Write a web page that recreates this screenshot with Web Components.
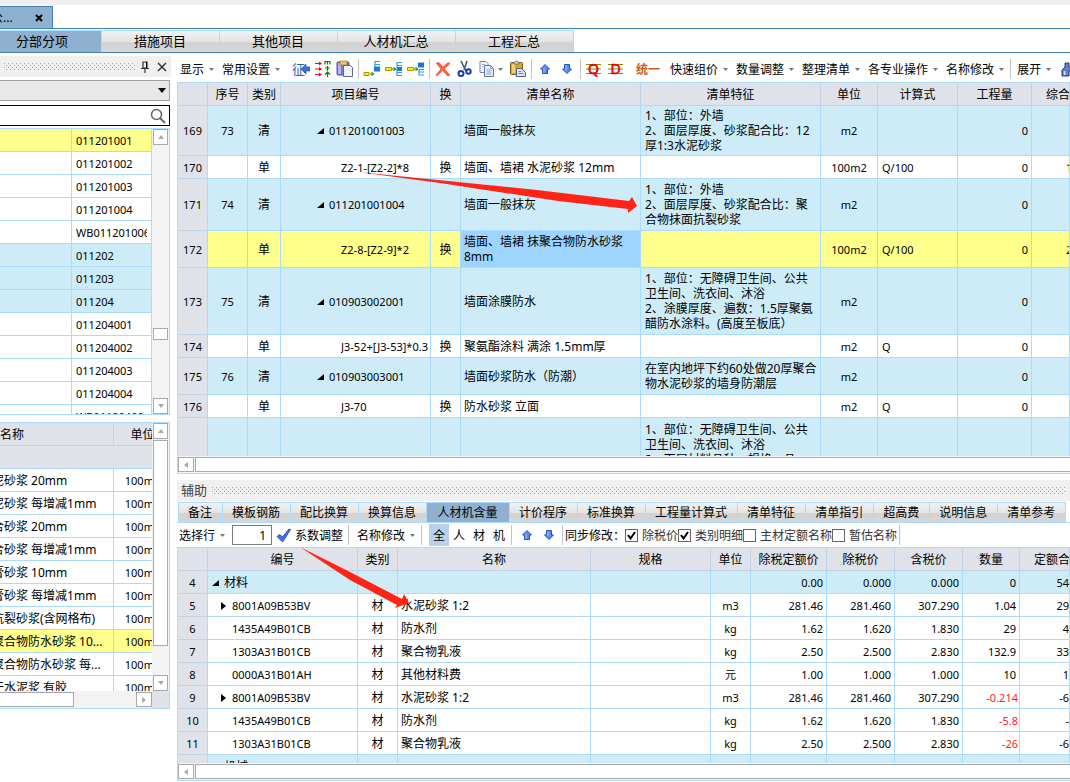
<!DOCTYPE html>
<html lang="zh-CN">
<head>
<meta charset="utf-8">
<title>分部分项</title>
<style>
  html, body { margin: 0; height: 100%; }
  body {
    --line: #abdcff; --edge: #3f80b4; --head: #dfe2e8; --head-line: #c3d3e6;
    --bill: #cdecf8; --mark: #ffff8c; --active: #8fb0ce;
    font: 12px/15px "Noto Sans", "Noto Sans CJK SC", sans-serif;
    color: #000; background: #fff; overflow: hidden;
  }
</style>
</head>
<body>
<cost-app></cost-app>

<script>
const define = (name, html, setup) => {
  const tpl = document.createElement('template');
  tpl.innerHTML = html;
  customElements.define(name, class extends HTMLElement {
    constructor() {
      super();
      this.attachShadow({ mode: 'open' }).append(tpl.content.cloneNode(true));
    }
    connectedCallback() { if (setup && !this.ready) { this.ready = true; setup(this, this.shadowRoot); } }
  });
};

/* ---------- icons ---------- */
const upArrow = '<path d="M9 4.500L13.500 9H11.500V13.500H6.500V9H4.500Z" fill="#5b8df0" stroke="#2450b8"/><path d="M8 8v5" stroke="#a9c6ff"/>';
const downArrow = '<path d="M9 13.500L13.500 9H11.500V4.500H6.500V9H4.500Z" fill="#5b8df0" stroke="#2450b8"/><path d="M8 5v5" stroke="#a9c6ff"/>';
const blueBars = '<g fill="none" stroke="#3a9ae0" stroke-width="1.200">';
const icons = {
  levy: '<text x="0" y="14" font-size="13" fill="#1f62c4">征</text><path d="M9 9l5-5v3h4v4h-4v3z" fill="#3a6fd8" stroke="#1c3f9c" stroke-width=".6"/>',
  arrows: '<g stroke="#f00" stroke-width="1.200" fill="#f00"><path d="M1 3.500h6M1 9h6M1 14.500h6"/><path d="M5 1.500l3 2-3 2zM5 7l3 2-3 2zM5 12.500l3 2-3 2z" stroke="none"/></g><g stroke="#080" fill="none" stroke-width="1.200"><path d="M11 4.500V1.500h5v3M13.500 1.500v3M11 8h5M13.500 6v5M13.500 12v5M11 14.500l2.500-2.500 2.500 2.500"/></g>',
  clip: '<rect x="1" y="2" width="12" height="13" rx="1" fill="#7a78d4" stroke="#5350a8"/><rect x="2" y="3" width="3" height="11" fill="#b5b3f2"/><rect x="4" y="1" width="7" height="4" fill="#efc85c" stroke="#927330" stroke-width=".7"/><path d="M7.500 5.500h7l2 2v9h-9z" fill="#eef3fc" stroke="#566a94"/>',
  insChild: '<path d="M1 12.500h5v3H1z" fill="#fff000" stroke="#c88800"/><path d="M7 14h4M8.500 12l2 2-2 2" stroke="#087a08" fill="none"/><path d="M11 6.500h6v5h-6z" fill="#1d78d4"/>' + blueBars + '<path d="M17 1.500h-5v3h5M12 4v3"/></g>',
  insMid: '<path d="M0.500 7.500h6v3h-6z" fill="#fff000" stroke="#c88800"/><path d="M7 9h4M8.500 7l2 2-2 2" stroke="#087a08" fill="none"/><path d="M12 7h5v4h-5z" fill="#1d78d4"/>' + blueBars + '<path d="M17 2.500h-5v13h5M12 5.500h5M12 12.500h5"/></g>',
  insTop: '<path d="M0.500 7.500h6v3h-6z" fill="#fff000" stroke="#c88800"/><path d="M7 9h4M8.500 7l2 2-2 2" stroke="#087a08" fill="none"/><path d="M11 2.500h6v5h-6z" fill="#1d78d4"/>' + blueBars + '<path d="M17 9.500h-5v5.500h5M12 12h5"/></g>',
  del: '<path d="M2 3l3-.5 4 4.500 5-4.500 2 1-5.500 5.500 5.500 6-2 1-5.500-5.500L3 16l-1-1 5-6z" fill="#ff5f3c" stroke="#d83a1e" stroke-width=".5"/>',
  cut: '<path d="M5 1l5 10M11 1L8 10" stroke="#44597e" stroke-width="1.600" fill="none"/><circle cx="5" cy="13.500" r="2.500" fill="none" stroke="#173fa8" stroke-width="2"/><circle cx="12.500" cy="11.500" r="2.200" fill="none" stroke="#173fa8" stroke-width="2"/>',
  copy: '<path d="M2 1.500h6l2 2v9H2z" fill="#f3f6fc" stroke="#7285b8"/><path d="M6.500 5.500h6l3 3v8h-9z" fill="#e8effa" stroke="#5f74aa"/><path d="M12.500 5.500v3h3M8.500 10h5M8.500 12h5M8.500 14h5M4 4.500h3M4 6.500h1" stroke="#7f94c6" stroke-width=".8" fill="none"/>',
  paste: '<rect x="1.500" y="2.500" width="12" height="12" rx="1" fill="#d9a335" stroke="#80591a"/><rect x="3" y="4" width="3" height="9" fill="#f2cf72"/><path d="M5 4V2h1.500l1-1.500 1 1.500H10v2z" fill="#ddd" stroke="#555" stroke-width=".7"/><path d="M7.500 8.500h5l4 4v4h-9z" fill="#dce6f6" stroke="#4b5d85"/><path d="M9.500 11.500h3M9.500 13.500h5" stroke="#7084ac"/>',
  up: upArrow, down: downArrow,
  q: '<path d="M1 4.500h15M1 9h15M1 13.500h15" stroke="#8a8a00" stroke-width="1.200"/><text x="8.500" y="14" text-anchor="middle" font-size="14" fill="#e80000" stroke="#e80000" stroke-width=".6">Q</text>',
  d: '<path d="M1 4.500h15M1 9h15M1 13.500h15" stroke="#8a8a00" stroke-width="1.200"/><text x="8.500" y="14" text-anchor="middle" font-size="14" fill="#e80000" stroke="#e80000" stroke-width=".6">D</text>',
  find: '<path d="M4 3h4v4h3V3h4v4l3 3v6h-7v-5H8v5H1v-6l3-3z" fill="#5f83bf" stroke="#213b7c"/><path d="M3.500 11v4M12.500 11v4" stroke="#dbe7fa" stroke-width="1.600"/>',
  check: '<path d="M2 10.500l3-2 2.500 2.500L14 3l1.500.5L8 15.500H7z" fill="#3f72f0" stroke="#153aa8" stroke-width=".8"/>'
};
define('ui-icon', `<style>:host{display:block;width:18px;height:18px}svg{display:block;width:18px;height:18px}</style><svg viewBox="0 0 18 18" aria-hidden="true"></svg>`,
  (el, root) => { root.querySelector('svg').innerHTML = icons[el.getAttribute('name')]; });

/* ---------- toolbar parts ---------- */
const buttonReset = 'button{display:flex;align-items:center;margin:0;padding:0;border:0;background:none;font:inherit;color:inherit;white-space:nowrap}';
define('tool-bar', `<style>:host{display:flex;align-items:center;overflow:hidden;white-space:nowrap}</style><slot></slot>`);
define('tool-group', `<style>:host{display:flex;align-items:center;flex:none;gap:4px;padding:0 0 0 4px}</style><slot></slot>`);
define('tool-sep', `<style>:host{display:block;flex:none;width:1px;height:20px;margin:0 2px;background:#c4c4c4}</style>`);
define('tool-menu', `<style>:host{display:block;flex:none}${buttonReset}button{gap:5px;padding-right:4px}svg{width:5px;height:3px}</style>
  <button aria-haspopup="menu"><slot></slot><svg viewBox="0 0 5 3" aria-hidden="true"><path d="M0 0h5L2.500 3z" fill="#777"/></svg></button>`);
define('icon-button', `<style>:host{display:block;flex:none}${buttonReset}button{justify-content:center;width:22px;height:22px}</style>
  <button><ui-icon></ui-icon></button>`, (el, root) => {
    const icon = document.createElement('ui-icon');
    icon.setAttribute('name', el.getAttribute('name'));
    root.querySelector('ui-icon').replaceWith(icon);
    root.querySelector('button').setAttribute('aria-label', el.getAttribute('label'));
  });
define('text-button', `<style>:host{display:block;flex:none}${buttonReset}button{justify-content:center;gap:2px;min-width:20px;height:22px}:host([pressed]) button{background:#b9d1e8}</style>
  <button><slot></slot></button>`);
define('check-option', `<style>:host{display:block;flex:none;color:#333}label{display:flex;align-items:center;gap:4px}
  .box{display:grid}.box>*{grid-area:1/1}input{appearance:none;margin:0;width:13px;height:13px;border:1px solid #666;background:#fff}
  svg{width:13px;height:13px;visibility:hidden;pointer-events:none}input:checked+svg{visibility:visible}</style>
  <label><span class="box"><input type="checkbox"><svg viewBox="0 0 13 13"><path d="M3 6l2.500 3.500L10 3" fill="none" stroke="#000" stroke-width="2"/></svg></span><slot></slot></label>`,
  (el, root) => { root.querySelector('input').checked = el.hasAttribute('checked'); });

/* ---------- tabs ---------- */
define('tab-item', `<style>:host{display:block;flex:none}${buttonReset}
  button{box-sizing:border-box;justify-content:center;width:100%;height:var(--tab-h,19px);padding:0 10px 0 9px;border-right:1px solid var(--line);
    background:linear-gradient(#f2f2f2,#e4e4e4 50%,#d2d2d2 55%,#d6d6d6)}
  :host([selected]) button{min-width:83px;background:var(--active)}</style><button role="tab"><slot></slot></button>`);
define('tab-strip', `<style>:host{display:flex;border-bottom:1px solid var(--line)}.row{display:flex;flex:none;border:1px solid var(--line);border-width:1px 0 0 1px}</style>
  <div class="row" role="tablist"><slot></slot></div>`);

/* ---------- docked panel caption ---------- */
define('panel-title', `<style>:host{display:flex;align-items:center;box-sizing:border-box;flex:none;height:21px;gap:5px;padding:0 4px;background:#f0f0f0;color:#444;font-size:13px}
  svg{display:block;flex:1;min-width:0;height:8px}::slotted(*){flex:none}</style>
  <slot></slot><svg aria-hidden="true"><defs><pattern id="dots" width="4" height="4" patternUnits="userSpaceOnUse"><path d="M0 0h1v1H0zM2 2h1v1H2z" fill="#a4a4a4"/></pattern></defs><rect width="100%" height="8" fill="url(#dots)"/></svg><slot name="end"></slot>`);

/* ---------- scroll bar ---------- */
define('scroll-bar', `<style>
  :host{display:flex;box-sizing:border-box;background:#f3f3f3;gap:1px;padding:1px 0 1px}
  :host([vertical]){flex-direction:column;padding:0 1px}
  ${buttonReset}
  button{box-sizing:border-box;flex:none;justify-content:center;width:16px;height:15px;border:1px solid #a9a9a9;background:#fff}
  :host([vertical]) button{width:15px;height:16px}
  .track{display:flex;flex:1;flex-direction:inherit;min-width:0;min-height:0}
  .thumb{box-sizing:border-box;border:1px solid #a9a9a9;background:#fff}
  svg{width:8px;height:8px}
  :host([nostart]) .start,:host([noend]) .end{display:none}
  :host([nostart]) .thumb{border-left:0}
  :host([noend]) .thumb{border-right:0}
  </style><button class="start" aria-label="后退"><svg viewBox="0 0 8 8"><path fill="#a9a9a9"/></svg></button>
  <div class="track"><div class="pre"></div><div class="thumb"></div><div class="post"></div></div>
  <button class="end" aria-label="前进"><svg viewBox="0 0 8 8"><path fill="#a9a9a9"/></svg></button>`, (el, root) => {
    const v = el.hasAttribute('vertical');
    const [s, e] = root.querySelectorAll('path');
    s.setAttribute('d', v ? 'M1 6h6L4 2z' : 'M6 1v6L2 4z');
    e.setAttribute('d', v ? 'M1 2h6L4 6z' : 'M2 1v6l4-3z');
    const parts = el.getAttribute('parts').split(' ');
    ['.pre', '.thumb', '.post'].forEach((c, i) => { root.querySelector(c).style.flex = parts[i] + ' 1 0'; });
  });

/* ---------- data grid ---------- */
define('data-grid', `<style>
  :host{display:grid;box-sizing:border-box;grid-template:"view v" minmax(0,1fr) "h corner" auto / minmax(0,1fr) auto;border:1px solid var(--line);background:#fff;min-height:0}
  :host([open-left]){border-left:0}:host([open-right]){border-right:0}
  .view{grid-area:view;overflow:hidden}
  table{border-collapse:separate;border-spacing:0;table-layout:fixed;width:100%}
  table.fixed{width:0}
  th,td{box-sizing:border-box;padding:0 3px;border-right:1px solid var(--line);border-bottom:1px solid var(--line);font-weight:400;text-align:left;vertical-align:middle}
  td>div,th>div{overflow:hidden;white-space:pre}
  thead th{background:var(--head);border-color:var(--head-line);text-align:center;padding:0}
  tbody th{background:var(--head);border-color:var(--head-line)}
  .n{font-size:11px}.c{text-align:center}.r{text-align:right}
  .lead{text-align:left;padding-left:14px}
  .first{text-align:left}
  .far{padding:0 0 0 34px}.flush{padding:0}
  .code{padding:0 4px}
  .off{padding:0;text-indent:-8px}
  .bill>td{background:var(--bill)}.mark>td{background:var(--mark)}.mark>td.sel{background:#9dd5ff}
  .feat{padding:0 0 0 4px}
  .top>td.feat{vertical-align:top;padding-top:4px}
  .neg{color:#f22;padding-right:1px}
  .l1{padding-left:36px}.l2{padding:0 0 0 60px}
  .t0{padding-left:4px}.t1{padding-left:12px}.t2{padding-left:24px}
  svg{width:7px;height:8px;margin-right:5px}
  ::slotted([slot=v]){grid-area:v;width:17px}::slotted([slot=h]){grid-area:h;height:17px}
  ::slotted([slot=corner]){grid-area:corner;background:var(--head)}
  </style><div class="view"><table><colgroup></colgroup><thead></thead><tbody></tbody></table></div><slot name="v"></slot><slot name="h"></slot><slot name="corner"></slot>`,
  (el, root) => {
    const { cols, rows, fixed } = grids[el.id];
    const open = '<svg viewBox="0 0 7 8"><path d="M7 1v6H0z"/></svg>', shut = '<svg viewBox="0 0 7 8"><path d="M1 0v8l5-4z"/></svg>';
    const text = s => String(s).replace('◢', open).replace('▶', shut);
    root.querySelector('table').classList.toggle('fixed', !!fixed);
    root.querySelector('colgroup').innerHTML = cols.map(c => c.w ? `<col style="width:${c.w}px">` : '<col>').join('');
    if (cols[0].h !== undefined) root.querySelector('thead').innerHTML =
      `<tr style="height:23px">${cols.map(c => `<th class="${c.hc || ''}"><div>${c.h}</div></th>`).join('')}</tr>` +
      (el.hasAttribute('filter') ? `<tr style="height:23px"><th style="border-color:var(--head) var(--head) var(--line)" colspan="${cols.length}"></th></tr>` : '');
    root.querySelector('tbody').innerHTML = rows.map(r => `<tr class="${r.k || ''}" style="height:${r.h || 23}px">` + cols.map((c, i) => {
      const v = r.v[i] ?? '', tag = c.row ? 'th' : 'td';
      const cell = typeof v === 'object' ? v : { t: v, c: '' };
      return `<${tag} class="${c.c || ''} ${cell.c}"><div>${text(cell.t)}</div></${tag}>`;
    }).join('') + '</tr>').join('');
  });

const l1 = t => ({ t: '◢' + t, c: 'l1' }), l2 = t => ({ t, c: 'l2' });
const t1 = t => ({ t: '▶' + t, c: 't1' }), t2 = t => ({ t, c: 't2' }), neg = t => ({ t, c: 'neg' });
const grids = {
  bill: {
    cols: [
      { h: '', w: 30, c: 'n c', row: 1 }, { h: '序号', w: 40, c: 'n c' }, { h: '类别', w: 33, c: 'c' }, { h: '项目编号', w: 150, c: 'n' },
      { h: '换', w: 30, c: 'c' }, { h: '清单名称', w: 180 }, { h: '清单特征', w: 180, c: 'feat' }, { h: '单位', w: 57, c: 'n c' },
      { h: '计算式', w: 80, c: 'n code' }, { h: '工程量', w: 74, c: 'n r' }, { h: '综合单价', hc: 'lead', c: 'n far' }],
    rows: [
      { k: 'bill', h: 50, v: ['169', '73', '清', l1('011201001003'), '', '墙面一般抹灰', '1、部位：外墙\n2、面层厚度、砂浆配合比：12\n厚1:3水泥砂浆', 'm2', '', '0'] },
      { v: ['170', '', '单', l2('Z2-1-[Z2-2]*8'), '换', '墙面、墙裙 水泥砂浆 12mm', '', '100m2', 'Q/100', '0', '1'] },
      { k: 'bill', h: 52, v: ['171', '74', '清', l1('011201001004'), '', '墙面一般抹灰', '1、部位：外墙\n2、面层厚度、砂浆配合比：聚\n合物抹面抗裂砂浆', 'm2', '', '0'] },
      { k: 'mark', h: 37, v: ['172', '', '单', l2('Z2-8-[Z2-9]*2'), '换', { t: '墙面、墙裙 抹聚合物防水砂浆\n8mm', c: 'sel' }, '', '100m2', 'Q/100', '0', '2'] },
      { k: 'bill', h: 67, v: ['173', '75', '清', l1('010903002001'), '', '墙面涂膜防水', '1、部位：无障碍卫生间、公共\n卫生间、洗衣间、沐浴\n2、涂膜厚度、遍数：1.5厚聚氨\n醋防水涂料。(高度至板底）', 'm2', '', '0'] },
      { v: ['174', '', '单', l2('J3-52+[J3-53]*0.3'), '换', '聚氨酯涂料 满涂 1.5mm厚', '', 'm2', 'Q', '0'] },
      { k: 'bill', h: 37, v: ['175', '76', '清', l1('010903003001'), '', '墙面砂浆防水（防潮）', '在室内地坪下约60处做20厚聚合\n物水泥砂浆的墙身防潮层', 'm2', '', '0'] },
      { v: ['176', '', '单', l2('J3-70'), '换', '防水砂浆 立面', '', 'm2', 'Q', '0'] },
      { k: 'bill top', h: 97, v: ['', '', '', '', '', '', '1、部位：无障碍卫生间、公共\n卫生间、洗衣间、沐浴\n2、面层材料品种、规格、品'] }]
  },
  usage: {
    cols: [
      { h: '', w: 30, c: 'n c', row: 1 }, { h: '编号', w: 150, c: 'n' }, { h: '类别', w: 40, c: 'c' }, { h: '名称', w: 193 }, { h: '规格', w: 120 },
      { h: '单位', w: 40, c: 'n c' }, { h: '除税定额价', w: 76, c: 'n r' }, { h: '除税价', w: 68, c: 'n r' }, { h: '含税价', w: 68, c: 'n r' },
      { h: '数量', w: 57, c: 'n r' }, { h: '定额合价', hc: 'lead', c: 'n r flush' }],
    rows: [
      { k: 'bill', v: ['4', { t: '◢<span style="font-size:12px">材料</span>', c: 't0' }, '', '', '', '', '0.00', '0.000', '0.000', '0', '54'] },
      { v: ['5', t1('8001A09B53BV'), '材', '水泥砂浆 1:2', '', 'm3', '281.46', '281.460', '307.290', '1.04', '29'] },
      { v: ['6', t2('1435A49B01CB'), '材', '防水剂', '', 'kg', '1.62', '1.620', '1.830', '29', '4'] },
      { v: ['7', t2('1303A31B01CB'), '材', '聚合物乳液', '', 'kg', '2.50', '2.500', '2.830', '132.9', '33'] },
      { v: ['8', t2('0000A31B01AH'), '材', '其他材料费', '', '元', '1.00', '1.000', '1.000', '10', '1'] },
      { v: ['9', t1('8001A09B53BV'), '材', '水泥砂浆 1:2', '', 'm3', '281.46', '281.460', '307.290', neg('-0.214'), '-6'] },
      { v: ['10', t2('1435A49B01CB'), '材', '防水剂', '', 'kg', '1.62', '1.620', '1.830', neg('-5.8'), '-'] },
      { v: ['11', t2('1303A31B01CB'), '材', '聚合物乳液', '', 'kg', '2.50', '2.500', '2.830', neg('-26'), '-6'] },
      { k: 'bill', v: ['12', { t: '◢<span style="font-size:12px">机械</span>', c: 't0' }, '', '', '', '', '0.00', '0.000', '0.000', '0', '0'] }]
  },
  codes: {
    fixed: 1,
    cols: [{ w: 72 }, { w: 80, c: 'n code' }],
    rows: ['011201001', '011201002', '011201003', '011201004', 'WB011201006', '011202', '011203', '011204', '011204001', '011204002', '011204003', '011204004', 'WB011204004']
      .map((t, i) => ({ k: i === 0 ? 'mark' : t.length === 6 ? 'bill' : '', v: ['', t] }))
  },
  quota: {
    fixed: 1,
    cols: [{ h: '名称', hc: 'first', w: 114, c: 'off' }, { h: '单位', w: 58, c: 'n c' }],
    rows: ['泥砂浆 20mm', '泥砂浆 每增减1mm', '合砂浆 20mm', '合砂浆 每增减1mm', '膏砂浆 10mm', '膏砂浆 每增减1mm', '抗裂砂浆(含网格布)', '聚合物防水砂浆 10...', '聚合物防水砂浆 每...', '干水泥浆 有胶']
      .map((t, i) => ({ k: i === 7 ? 'mark' : '', v: [t, '100m2'] }))
  }
};

/* ---------- side panel ---------- */
define('side-panel', `<style>
  :host{display:flex;flex-direction:column;flex:none;width:171px;padding-top:3px}
  ${buttonReset} svg{display:block}
  .field{display:grid;align-items:center;margin-right:1px;height:21px}
  .field>*{grid-area:1/1}.field svg{justify-self:end;pointer-events:none}
  select,input{appearance:none;box-sizing:border-box;width:100%;height:100%;margin:0;padding:0 24px 0 4px;font:inherit;border-radius:0;outline:0}
  select{border:1px solid #a0a0a0;border-left:0;background:#e8e8e8}
  input{border:1px solid #000;border-left:0;background:#fff}
  .pick{margin-top:3px}.pick svg{margin-right:4px}.find{margin:4px 1px 2px 0}.find svg{margin-right:4px}
  data-grid{flex:0 0 287px;margin-right:1px}
  #quota{margin-top:7px}
  </style>
  <panel-title><span slot="end" style="display:flex;gap:8px">
    <button aria-label="固定"><svg width="8" height="12" viewBox="0 0 8 12"><path d="M2 1h4v6H2zM0 7.500h8M4 8v4" fill="none" stroke="#333" stroke-width="1.200"/><path d="M5 1h1v6H5z"/></svg></button>
    <button aria-label="关闭"><svg width="10" height="10" viewBox="0 0 10 10"><path d="M1 1l8 8M9 1L1 9" stroke="#333" stroke-width="1.500"/></svg></button></span></panel-title>
  <div class="field pick"><select aria-label="定额库"><option></option></select><svg width="8" height="5" viewBox="0 0 8 5"><path d="M0 0h8L4 5z"/></svg></div>
  <div class="field find"><input type="text" aria-label="查找"><svg width="16" height="16" viewBox="0 0 16 16"><circle cx="6.500" cy="6.500" r="5" fill="none" stroke="#666" stroke-width="1.500"/><path d="M10 10l5 5" stroke="#666" stroke-width="2"/></svg></div>
  <data-grid id="codes" open-left><scroll-bar slot="v" vertical parts="185 10 58"></scroll-bar></data-grid>
  <data-grid id="quota" open-left filter><scroll-bar slot="v" vertical parts="0 207 28"></scroll-bar><scroll-bar slot="h" nostart parts="0 74 61"></scroll-bar><span slot="corner"></span></data-grid>`);

/* ---------- lower docked panel ---------- */
define('assist-panel', `<style>
  :host{display:flex;flex-direction:column;box-sizing:border-box;flex:0 0 302px;min-height:0;padding-bottom:1px}
  tab-strip{flex:none;margin-top:1px;padding-left:1px}
  tool-bar{flex:none;height:24px}
  input{box-sizing:border-box;width:40px;height:20px;margin:0 3px;padding:0 5px;border:1px solid #7a7a7a;font:inherit;text-align:right;outline:0}
  .pick{padding-left:2px;gap:0}
  .kinds{gap:0;padding:0 0 0 5px}
  .moves{gap:0;padding:0 0 0 2px}
  .opts{gap:0;padding:0}
  data-grid{flex:1}
  </style>
  <panel-title>辅助</panel-title>
  <tab-strip><tab-item>备注</tab-item><tab-item>模板钢筋</tab-item><tab-item>配比换算</tab-item><tab-item>换算信息</tab-item><tab-item selected>人材机含量</tab-item><tab-item>计价程序</tab-item><tab-item>标准换算</tab-item><tab-item>工程量计算式</tab-item><tab-item>清单特征</tab-item><tab-item>清单指引</tab-item><tab-item>超高费</tab-item><tab-item>说明信息</tab-item><tab-item>清单参考</tab-item></tab-strip>
  <tool-bar>
    <tool-group class="pick"><tool-menu>选择行</tool-menu><input type="text" value="1" aria-label="选择行数"><text-button><ui-icon name="check"></ui-icon>系数调整</text-button></tool-group>
    <tool-sep style="margin:0 8px 0 5px"></tool-sep><tool-menu>名称修改</tool-menu><tool-sep></tool-sep>
    <tool-group class="kinds"><text-button pressed>全</text-button><text-button>人</text-button><text-button>材</text-button><text-button>机</text-button></tool-group>
    <tool-sep></tool-sep><tool-group class="moves"><icon-button name="up" label="上移"></icon-button><icon-button name="down" label="下移"></icon-button></tool-group>
    <tool-sep></tool-sep><tool-group class="opts"><span>同步修改：</span><check-option checked>除税价</check-option><check-option checked>类别明细</check-option><check-option>主材定额名称</check-option><check-option>暂估名称</check-option></tool-group><tool-sep></tool-sep>
  </tool-bar>
  <data-grid id="usage" open-right><scroll-bar slot="h" noend parts="0 1 0"></scroll-bar></data-grid>`);

/* ---------- annotations drawn over the grids ---------- */
define('red-arrows', `<style>:host{position:absolute;inset:0;pointer-events:none}svg{display:block;width:100%;height:100%}</style>
  <svg aria-hidden="true" fill="#ff2416"><path d="M358 172L537 190L629 201L632 197L637 206L628 213V209L558 201L440 183Z"/><path d="M300 547L350 572L402 599L404 594L409 603L395 608L397 605L350 580Z"/></svg>`);

/* ---------- application ---------- */
define('cost-app', `<style>
  :host{display:flex;flex-direction:column;position:relative;height:100vh;overflow:hidden}
  ${buttonReset}
  .caption{flex:none;height:5px;background:#f0f0f0}
  .docs{display:flex;flex:none;padding-top:1px;border-bottom:1px solid var(--edge);margin-bottom:1px}
  .doc{display:flex;box-sizing:border-box;align-items:center;justify-content:space-between;width:53px;height:22px;padding-right:9px;border:1px solid var(--edge);border-width:1px 1px 0 0;background:var(--active);overflow:hidden}
  .doc span{margin-left:-9px}
  .main{flex:none;border-bottom-color:var(--edge);--tab-h:21px;font-size:13px}
  .main tab-item{width:118px}.main tab-item:first-child{margin-left:-17px}
  .body{display:flex;flex:1;gap:6px;min-height:0}
  .work{display:flex;flex:1;flex-direction:column;min-width:0}
  .work>tool-bar{flex:none;height:29px;padding-top:3px;box-sizing:border-box}
  .icons{display:flex;flex:none}
  .brand{color:#c8601c;font-weight:700;padding:0 6px 0 9px}
  #bill{flex:1;margin-bottom:6px}
  </style>
  <div class="caption"></div>
  <div class="docs"><div class="doc"><span>公...</span><button aria-label="关闭"><svg width="8" height="8" viewBox="0 0 8 8"><path d="M1 1l6 6M7 1L1 7" stroke="#000" stroke-width="2"/></svg></button></div></div>
  <tab-strip class="main"><tab-item selected>分部分项</tab-item><tab-item>措施项目</tab-item><tab-item>其他项目</tab-item><tab-item>人材机汇总</tab-item><tab-item>工程汇总</tab-item></tab-strip>
  <div class="body">
    <side-panel></side-panel>
    <div class="work">
      <tool-bar>
        <tool-group style="padding:0 6px 0 3px"><tool-menu>显示</tool-menu><tool-menu>常用设置</tool-menu></tool-group>
        <div class="icons"><icon-button name="levy" label="征"></icon-button><icon-button name="arrows" label="对应"></icon-button><icon-button name="clip" label="粘贴板"></icon-button></div><tool-sep></tool-sep>
        <div class="icons"><icon-button name="insChild" label="插入子项"></icon-button><icon-button name="insMid" label="插入"></icon-button><icon-button name="insTop" label="插入到首"></icon-button></div><tool-sep></tool-sep>
        <div class="icons"><icon-button name="del" label="删除"></icon-button><icon-button name="cut" label="剪切"></icon-button><icon-button name="copy" label="复制"></icon-button></div><tool-menu></tool-menu>
        <icon-button name="paste" label="粘贴"></icon-button><tool-sep></tool-sep>
        <div class="icons"><icon-button name="up" label="上移"></icon-button><icon-button name="down" label="下移"></icon-button></div><tool-sep></tool-sep>
        <div class="icons"><icon-button name="q" label="清单"></icon-button><icon-button name="d" label="定额"></icon-button></div>
        <text-button class="brand">统一</text-button>
        <tool-group><tool-menu>快速组价</tool-menu><tool-menu>数量调整</tool-menu><tool-menu>整理清单</tool-menu><tool-menu>各专业操作</tool-menu><tool-menu>名称修改</tool-menu></tool-group><tool-sep></tool-sep>
        <tool-group><tool-menu>展开</tool-menu><icon-button name="find" label="查找"></icon-button></tool-group>
      </tool-bar>
      <data-grid id="bill" open-right><scroll-bar slot="h" noend parts="0 1 0"></scroll-bar></data-grid>
      <assist-panel></assist-panel>
    </div>
  </div>
  <red-arrows></red-arrows>`);
</script>
</body>
</html>
